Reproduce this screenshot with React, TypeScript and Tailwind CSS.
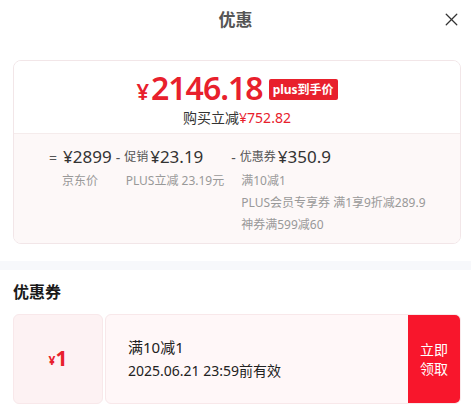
import React from "react";
import { X } from "lucide-react";

const font = { fontFamily: '"Noto Sans", "Noto Sans CJK SC", sans-serif' };

export default function App() {
  return (
    <div className="w-[471px] h-[407px] bg-white overflow-hidden text-[#333]" style={font}>
      {/* header */}
      <div className="relative h-[40px] flex items-center justify-center">
        <span className="text-[17px] font-bold text-[#555]">优惠</span>
        <button className="absolute right-[9px] top-[9px] text-[#333]">
          <X size={21} strokeWidth={1.5} />
        </button>
      </div>

      <div className="pl-[13px] pr-[10px] pt-[20px]">
        <div className="rounded-[8px] border border-[#f2e6e8] overflow-hidden">
          <div className="h-[72px] pt-[5px] flex flex-col items-center justify-center bg-white">
            <div className="flex items-center gap-[6px] h-[30px] leading-none">
              <span className="text-[#e8202c] font-semibold flex items-baseline">
                <span className="text-[22px] mr-[2px]">¥</span>
                <span className="text-[32px] tracking-[-1px]">2146.18</span>
              </span>
              <span className="bg-[#e8202c] text-white text-[12px] font-bold rounded-[2px] px-[4px] h-[21px] leading-[21px] mt-[3px]">plus到手价</span>
            </div>
            <div className="text-[14px] leading-[18px] mt-[6px]">
              购买立减<span className="text-[#e8202c]">¥752.82</span>
            </div>
          </div>
          <div className="h-[110px] bg-[#fdf8f8] border-t border-[#f5ecec] pl-[35px] pt-[10px] flex">
            <div className="flex flex-col">
              <div className="flex items-center h-[26px] text-[17px]">
                <span className="text-[14px] mr-[6px] text-[#555]">=</span>
                <span className="text-[#333]">¥2899</span>
              </div>
              <div className="text-[12px] text-[#999] pl-[13px] leading-[22px]">京东价</div>
            </div>
            <div className="flex flex-col ml-[4px]">
              <div className="flex items-center h-[26px] text-[17px]">
                <span className="text-[14px] mr-[4px] text-[#555]">-</span>
                <span className="text-[12px] mr-[2px] text-[#555]">促销</span>
                <span className="text-[#333]">¥23.19</span>
              </div>
              <div className="text-[12px] text-[#999] pl-[10px] leading-[22px]">PLUS立减 23.19元</div>
            </div>
            <div className="flex flex-col ml-[7px]">
              <div className="flex items-center h-[26px] text-[17px]">
                <span className="text-[14px] mr-[4px] text-[#555]">-</span>
                <span className="text-[12px] mr-[2px] text-[#555]">优惠券</span>
                <span className="text-[#333]">¥350.9</span>
              </div>
              <div className="text-[12px] text-[#999] pl-[10px] leading-[22px]">
                <div>满10减1</div>
                <div>PLUS会员专享券 满1享9折减289.9</div>
                <div>神券满599减60</div>
              </div>
            </div>
          </div>
        </div>
      </div>

      <div className="h-[9px] bg-[#f7f8fb] mt-[17px]" />

      <div className="pl-[13px] pr-[10px]">
        <div className="text-[16px] font-bold text-[#1a1a1a] h-[44px] flex items-center">优惠券</div>
        <div className="flex h-[90px]">
          <div className="w-[90px] rounded-[6px] bg-[#fdf2f3] border border-[#f8e8ea] flex items-center justify-center text-[#e8202c] font-bold">
            <span className="text-[12px] mt-[4px]">¥</span>
            <span className="text-[21px]">1</span>
          </div>
          <div className="flex-1 ml-[2px] rounded-[6px] bg-[#fff7f8] border border-[#f8e8ea] flex overflow-hidden">
            <div className="flex-1 pl-[22px] flex flex-col justify-center text-[14px] leading-[23px] text-[#222]">
              <div className="text-[15px]">满10减1</div>
              <div>2025.06.21 23:59前有效</div>
            </div>
            <div className="w-[52px] bg-[#f8162c] text-white text-[14px] leading-[19px] flex flex-col items-center justify-center">
              <span>立即</span>
              <span>领取</span>
            </div>
          </div>
        </div>
      </div>
    </div>
  );
}
